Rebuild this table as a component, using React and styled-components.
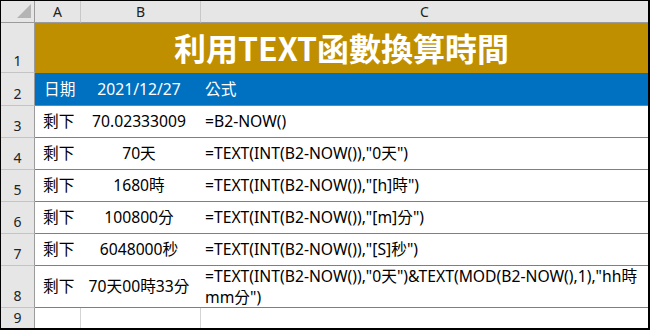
import React from 'react';
import styled, { createGlobalStyle } from 'styled-components';

const GlobalStyle = createGlobalStyle`
  html, body {
    margin: 0;
    padding: 0;
    background: #fff;
  }
  * {
    box-sizing: border-box;
  }
`;

const Frame = styled.div`
  width: 650px;
  height: 330px;
  border-top: 1px solid #000;
  border-left: 1px solid #000;
  border-right: 2px solid #000;
  border-bottom: 2px solid #000;
  display: grid;
  grid-template-columns: 34px 46px 120px 1fr;
  grid-template-rows: 22px 50px 33px repeat(5, 32px) 42px 1fr;
  font-family: 'Noto Sans', 'Noto Sans CJK TC', sans-serif;
  background: #fff;
  overflow: hidden;
`;

const Corner = styled.div`
  background: #e6e6e6;
  border-right: 1px solid #9b9b9b;
  border-bottom: 1px solid #9b9b9b;
  display: flex;
  align-items: flex-end;
  justify-content: flex-end;
  padding: 0 3px 4px 0;
`;

const ColHead = styled.div`
  background: #e6e6e6;
  border-bottom: 1px solid #9b9b9b;
  border-right: ${(p) => (p.$last ? 'none' : '1px solid #c8c8c8')};
  display: flex;
  align-items: center;
  justify-content: center;
  font-size: 14px;
  color: #222;
  padding-bottom: 1px;
`;

const RowHead = styled.div`
  background: #e6e6e6;
  border-right: 1px solid #9b9b9b;
  border-bottom: 1px solid #c4c4c4;
  display: flex;
  align-items: flex-end;
  justify-content: center;
  font-size: 14px;
  color: #222;
  padding-bottom: 2px;
`;

const TitleCell = styled.div`
  grid-column: 2 / 5;
  background: #bf8f00;
  color: #fff;
  font-family: 'Noto Sans CJK TC', 'Noto Sans', sans-serif;
  font-weight: 700;
  font-size: 32px;
  display: flex;
  align-items: center;
  justify-content: center;
  padding-bottom: 2px;
`;

const Cell = styled.div`
  background: ${(p) => (p.$blue ? '#0070c0' : '#fff')};
  color: ${(p) => (p.$blue ? '#fff' : '#000')};
  border-bottom: 1px solid ${(p) => (p.$blue ? '#4a8fc9' : p.$light ? 'transparent' : '#7f7f7f')};
  border-right: ${(p) => (p.$grid ? '1px solid #d4d4d4' : 'none')};
  display: flex;
  align-items: center;
  justify-content: ${(p) => (p.$center ? 'center' : 'flex-start')};
  padding: 0 4px 0 ${(p) => (p.$center ? '0' : p.$pad || '4px')};
  font-size: 15.7px;
  line-height: 21px;
  white-space: nowrap;
`;

const Wrap = styled.span`
  display: block;
`;

const CornerMark = () => (
  <svg width="14" height="14" viewBox="0 0 14 14">
    <polygon points="14,0 14,14 0,14" fill="#b4b4b4" />
  </svg>
);

const rows = [
  { n: 3, b: '70.02333009', c: '=B2-NOW()' },
  { n: 4, b: '70天', c: '=TEXT(INT(B2-NOW()),"0天")' },
  { n: 5, b: '1680時', c: '=TEXT(INT(B2-NOW()),"[h]時")' },
  { n: 6, b: '100800分', c: '=TEXT(INT(B2-NOW()),"[m]分")' },
  { n: 7, b: '6048000秒', c: '=TEXT(INT(B2-NOW()),"[S]秒")' },
];

export default function App() {
  return (
    <>
      <GlobalStyle />
      <Frame>
        <Corner>
          <CornerMark />
        </Corner>
        <ColHead>A</ColHead>
        <ColHead>B</ColHead>
        <ColHead $last>C</ColHead>

        <RowHead>1</RowHead>
        <TitleCell>利用TEXT函數換算時間</TitleCell>

        <RowHead>2</RowHead>
        <Cell $blue $pad="9px">日期</Cell>
        <Cell $blue $center>2021/12/27</Cell>
        <Cell $blue>公式</Cell>

        {rows.map((r) => (
          <React.Fragment key={r.n}>
            <RowHead>{r.n}</RowHead>
            <Cell $pad="8px">剩下</Cell>
            <Cell $center>{r.b}</Cell>
            <Cell>{r.c}</Cell>
          </React.Fragment>
        ))}

        <RowHead>8</RowHead>
        <Cell $pad="8px">剩下</Cell>
        <Cell $center>70天00時33分</Cell>
        <Cell>
          <div>
            <Wrap>=TEXT(INT(B2-NOW()),"0天")&amp;TEXT(MOD(B2-NOW(),1),"hh時</Wrap>
            <Wrap>mm分")</Wrap>
          </div>
        </Cell>

        <RowHead>9</RowHead>
        <Cell $light $grid />
        <Cell $light $grid />
        <Cell $light />
      </Frame>
    </>
  );
}
